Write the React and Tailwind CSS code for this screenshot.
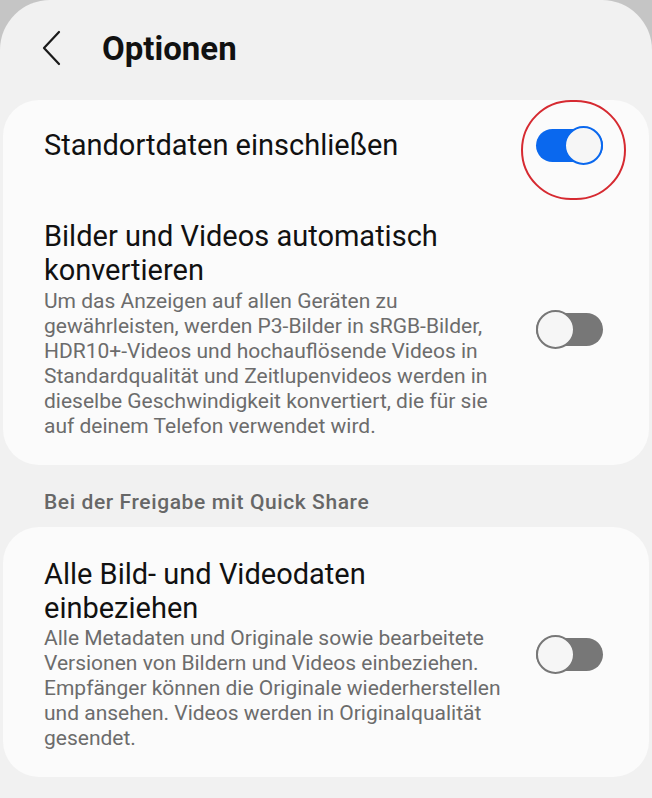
import React from "react";

function Toggle({ on }) {
  return (
    <div className="relative w-[67px] h-[39px] flex items-center shrink-0">
      <div
        className={
          "h-[33px] w-full rounded-full " + (on ? "bg-[#0a68ee]" : "bg-[#777777]")
        }
      />
      <div
        className={
          "absolute top-0 w-[39px] h-[39px] rounded-full bg-[#f6f6f6] border-2 " +
          (on ? "right-0 border-[#0a68ee]" : "left-0 border-[#777777]")
        }
      />
    </div>
  );
}

function Lines({ lines, className }) {
  return (
    <div className={className}>
      {lines.map((l) => (
        <div key={l} className="whitespace-nowrap">
          {l}
        </div>
      ))}
    </div>
  );
}

export default function App() {
  return (
    <div className="w-[652px] h-[798px] bg-[#c5c5c5] overflow-hidden">
      <div className="h-full bg-[#f1f1f1] rounded-t-[50px] px-[3px] font-['Roboto',sans-serif] text-[#111111]">
        <header className="h-[100px] flex items-center pb-[4px] pl-[37px]">
          <svg width="22" height="36" viewBox="0 0 22 36" className="text-[#1a1a1a]">
            <path
              d="M19 2 L4 18 L19 34"
              fill="none"
              stroke="currentColor"
              strokeWidth="2.2"
              strokeLinecap="round"
              strokeLinejoin="round"
            />
          </svg>
          <h1 className="ml-[40px] text-[33px] font-bold leading-none">Optionen</h1>
        </header>

        <section className="bg-[#fbfbfb] rounded-[36px]">
          <div className="h-[90px] flex items-center pl-[41px] pr-[46px]">
            <div className="flex-1 text-[29px] leading-[34px]">Standortdaten einschließen</div>
            <div className="relative">
              <Toggle on />
              <div className="absolute left-[-15px] top-[-26px] w-[105px] h-[100px] rounded-full border-2 border-[#d62a31]" />
            </div>
          </div>
          <div className="flex items-center pl-[41px] pr-[46px] pt-[29px] pb-[26px]">
            <div className="flex-1">
              <Lines
                className="text-[29px] leading-[34px]"
                lines={["Bilder und Videos automatisch", "konvertieren"]}
              />
              <Lines
                className="mt-[2px] text-[21px] leading-[25px] text-[#6c6c6c]"
                lines={[
                  "Um das Anzeigen auf allen Geräten zu",
                  "gewährleisten, werden P3-Bilder in sRGB-Bilder,",
                  "HDR10+-Videos und hochauflösende Videos in",
                  "Standardqualität und Zeitlupenvideos werden in",
                  "dieselbe Geschwindigkeit konvertiert, die für sie",
                  "auf deinem Telefon verwendet wird.",
                ]}
              />
            </div>
            <Toggle />
          </div>
        </section>

        <div className="pl-[41px] pt-[25px] pb-[12px] text-[21px] leading-[25px] font-medium tracking-[0.6px] text-[#676767]">
          Bei der Freigabe mit Quick Share
        </div>

        <section className="bg-[#fbfbfb] rounded-[36px]">
          <div className="flex items-center pl-[41px] pr-[46px] pt-[30px] pb-[26px]">
            <div className="flex-1">
              <Lines
                className="text-[29px] leading-[34px]"
                lines={["Alle Bild- und Videodaten", "einbeziehen"]}
              />
              <Lines
                className="mt-[1px] text-[21px] leading-[25px] text-[#6c6c6c]"
                lines={[
                  "Alle Metadaten und Originale sowie bearbeitete",
                  "Versionen von Bildern und Videos einbeziehen.",
                  "Empfänger können die Originale wiederherstellen",
                  "und ansehen. Videos werden in Originalqualität",
                  "gesendet.",
                ]}
              />
            </div>
            <Toggle />
          </div>
        </section>
      </div>
    </div>
  );
}
